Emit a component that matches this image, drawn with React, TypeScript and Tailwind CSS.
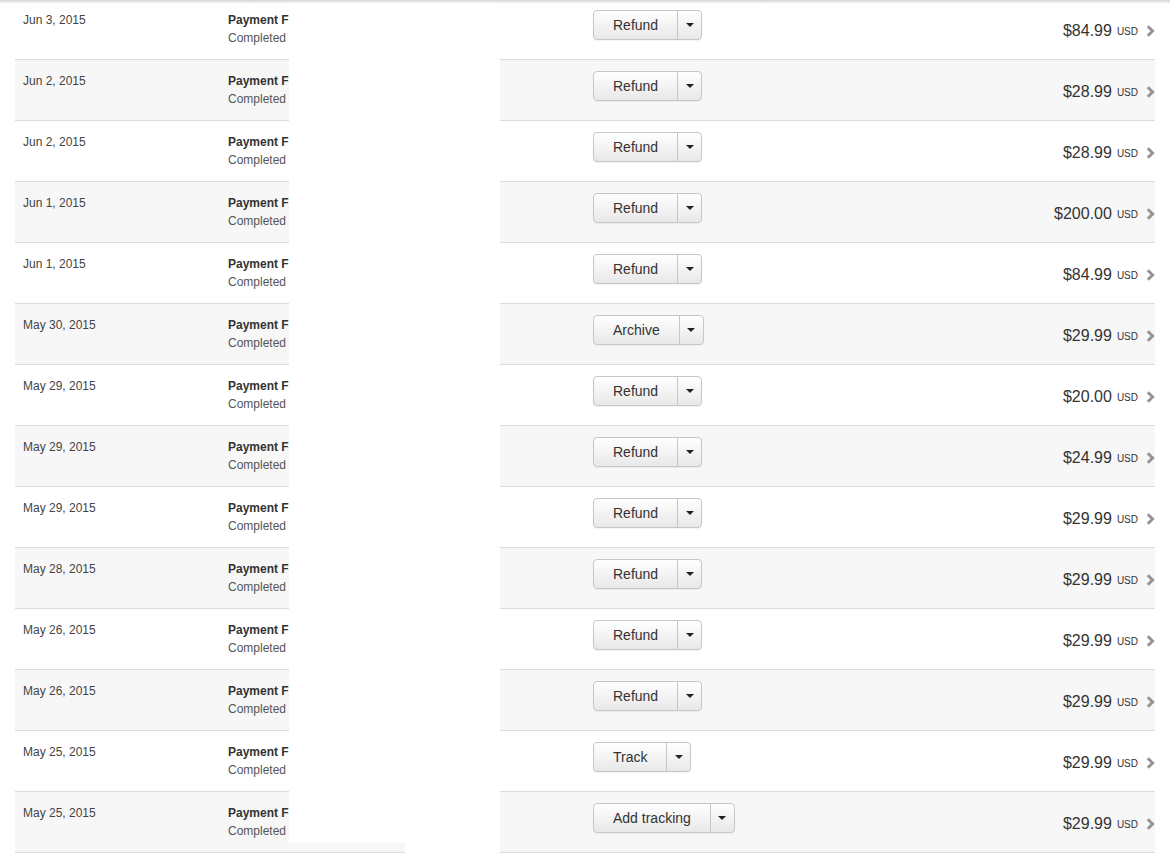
import React from "react";

type Row = {
  date: string;
  action: string;
  amount: string;
};

const rows: Row[] = [
  { date: "Jun 3, 2015", action: "Refund", amount: "$84.99" },
  { date: "Jun 2, 2015", action: "Refund", amount: "$28.99" },
  { date: "Jun 2, 2015", action: "Refund", amount: "$28.99" },
  { date: "Jun 1, 2015", action: "Refund", amount: "$200.00" },
  { date: "Jun 1, 2015", action: "Refund", amount: "$84.99" },
  { date: "May 30, 2015", action: "Archive", amount: "$29.99" },
  { date: "May 29, 2015", action: "Refund", amount: "$20.00" },
  { date: "May 29, 2015", action: "Refund", amount: "$24.99" },
  { date: "May 29, 2015", action: "Refund", amount: "$29.99" },
  { date: "May 28, 2015", action: "Refund", amount: "$29.99" },
  { date: "May 26, 2015", action: "Refund", amount: "$29.99" },
  { date: "May 26, 2015", action: "Refund", amount: "$29.99" },
  { date: "May 25, 2015", action: "Track", amount: "$29.99" },
  { date: "May 25, 2015", action: "Add tracking", amount: "$29.99" },
];

function SplitButton({ label }: { label: string }) {
  return (
    <div className="flex h-[30px] rounded-[4px] border border-[#c6c6c6] bg-gradient-to-b from-white to-[#e8e8e8] text-[14px] text-[#333] shadow-[0_1px_1px_rgba(0,0,0,0.05)]">
      <div className="flex items-center px-[19px] leading-none">{label}</div>
      <div className="flex w-[24px] items-center justify-center border-l border-[#c6c6c6]">
        <svg width="8" height="4" viewBox="0 0 8 4">
          <path d="M0 0 L8 0 L4 4 Z" fill="#222" />
        </svg>
      </div>
    </div>
  );
}

function Chevron() {
  return (
    <svg width="9" height="12" viewBox="0 0 9 12" className="ml-[8px]">
      <path d="M1.8 1.2 L6.6 6 L1.8 10.8" fill="none" stroke="#959595" strokeWidth="3" />
    </svg>
  );
}

export default function App() {
  return (
    <div
      className="relative h-[856px] w-[1170px] overflow-hidden bg-white"
      style={{ fontFamily: '"Liberation Sans", Arial, sans-serif' }}
    >
      <div className="-mt-px px-[15px]">
        {rows.map((r, i) => (
          <div
            key={i}
            className={`flex h-[61px] border-b border-[#dcdcdc] pl-[8px] pt-[11px] ${
              i % 2 === 1 ? "bg-[#f7f7f7]" : "bg-white"
            }`}
          >
            <div className="w-[205px] pt-px text-[12px] leading-[18px] text-[#444]">{r.date}</div>
            <div className="w-[365px] pt-px text-[12px] leading-[18px]">
              <div className="font-bold text-[#333]">Payment F</div>
              <div className="text-[#555]">Completed</div>
            </div>
            <SplitButton label={r.action} />
            <div className="flex flex-1 items-center justify-end self-start pt-[10px]">
              <span className="text-[16px] leading-[22px] text-[#333]">{r.amount}</span>
              <span className="ml-[5px] text-[10px] text-[#333]">USD</span>
              <Chevron />
            </div>
          </div>
        ))}
      </div>

      {/* top shadow */}
      <div className="absolute left-0 right-0 top-0 h-[4px] bg-gradient-to-b from-[#d6d6d6] to-transparent" />

      {/* redacted area */}
      <div className="absolute left-[289px] top-[3px] h-[840px] w-[211px] bg-white" />
      <div className="absolute left-[405px] top-[800px] h-[53px] w-[95px] bg-white" />
    </div>
  );
}
